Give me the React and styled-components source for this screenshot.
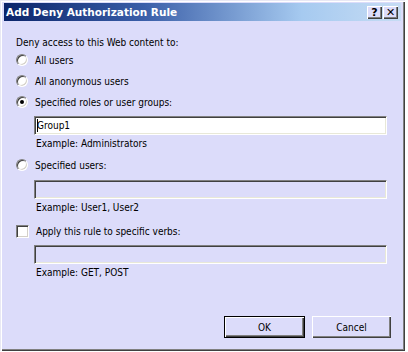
import React, { useState } from "react";
import styled, { createGlobalStyle } from "styled-components";

const GlobalStyle = createGlobalStyle`
  html, body {
    margin: 0;
    padding: 0;
    background: #ffffff;
    font-family: "DejaVu Sans Condensed", "Liberation Sans", sans-serif;
  }
`;

const Window = styled.div`
  width: 405px;
  height: 351px;
  box-sizing: border-box;
  padding: 3px 4px 4px 4px;
  background: #dcdcfa;
  display: flex;
  flex-direction: column;
  box-shadow: inset 1px 1px 0 #e8e8f4, inset 2px 2px 0 #ffffff,
    inset -1px -1px 0 #404040, inset -2px -2px 0 #808080;
`;

const TitleBar = styled.div`
  height: 18px;
  display: flex;
  align-items: center;
  justify-content: space-between;
  padding: 0 3px 0 2px;
  background: linear-gradient(to right, #0a246a 0%, #3a5ea8 35%, #a6caf0 75%, #c6dcf4 100%);
`;

const Title = styled.span`
  color: #ffffff;
  font-family: "DejaVu Sans", Verdana, sans-serif;
  font-weight: bold;
  font-size: 10.5px;
`;

const CaptionButtons = styled.div`
  display: flex;
  gap: 1px;
`;

const CaptionButton = styled.div`
  width: 15px;
  height: 13px;
  box-sizing: border-box;
  background: #dcdcfa;
  display: flex;
  align-items: center;
  justify-content: center;
  font-family: "DejaVu Sans", Verdana, sans-serif;
  font-size: 11px;
  font-weight: bold;
  color: #000;
  box-shadow: inset 1px 1px 0 #ffffff, inset -1px -1px 0 #404040, inset -2px -2px 0 #808080;
`;

const Body = styled.div`
  flex: 1;
  display: flex;
  flex-direction: column;
  padding: 13px 10px 0 12px;
  font-size: 10px;
  color: #000;
`;

const Heading = styled.div`
  height: 16px;
  display: flex;
  align-items: center;
`;

const OptionRow = styled.label`
  height: 20px;
  display: flex;
  align-items: center;
  gap: 7px;
  margin-top: ${p => p.$top || 0}px;
`;

const Radio = styled.span`
  width: 12px;
  height: 12px;
  box-sizing: border-box;
  border-radius: 50%;
  background: #ffffff;
  border: 1px solid;
  border-color: #808080 #ffffff #ffffff #808080;
  box-shadow: inset 1px 1px 0 #404040, inset -1px -1px 0 #d4d0c8;
  display: flex;
  align-items: center;
  justify-content: center;
  flex-shrink: 0;
`;

const RadioDot = styled.span`
  width: 4px;
  height: 4px;
  border-radius: 50%;
  background: #000;
`;

const Check = styled.span`
  width: 13px;
  height: 13px;
  box-sizing: border-box;
  background: #ffffff;
  border: 1px solid;
  border-color: #808080 #ffffff #ffffff #808080;
  box-shadow: inset 1px 1px 0 #404040, inset -1px -1px 0 #d4d0c8;
  flex-shrink: 0;
`;

const Field = styled.div`
  margin: ${p => p.$top || 0}px 0 0 18px;
  height: 19px;
  width: 353px;
  box-sizing: border-box;
  display: flex;
  align-items: center;
  padding-left: 2px;
  background: ${p => (p.$disabled ? "#dcdcfa" : "#ffffff")};
  border: 1px solid;
  border-color: #808080 #ffffff #ffffff #808080;
  box-shadow: inset 1px 1px 0 #404040, inset -1px -1px 0 #e8e8d8;
  font-size: 10px;
`;

const Caret = styled.span`
  display: inline-block;
  width: 1px;
  height: 13px;
  background: #000;
  margin-right: -1px;
`;

const Hint = styled.div`
  margin-left: 20px;
  height: 16px;
  display: flex;
  align-items: center;
`;

const Footer = styled.div`
  margin-top: auto;
  display: flex;
  justify-content: flex-end;
  gap: 7px;
  padding: 0 0 9px 0;
`;

const Button = styled.button`
  width: ${p => p.$w}px;
  height: 22px;
  box-sizing: border-box;
  background: #dcdcfa;
  border: ${p => (p.$default ? "1px solid #000" : "none")};
  font-family: "DejaVu Sans Condensed", "Liberation Sans", sans-serif;
  font-size: 10px;
  color: #000;
  padding: 0;
  box-shadow: inset 1px 1px 0 #ffffff, inset -1px -1px 0 #404040, inset -2px -2px 0 #808080;
`;

export default function App() {
  const [choice, setChoice] = useState("roles");
  const options = [
    { id: "all", label: "All users", top: 0 },
    { id: "anon", label: "All anonymous users", top: 1 },
    { id: "roles", label: "Specified roles or user groups:", top: 1 },
  ];

  return (
    <>
      <GlobalStyle />
      <Window>
        <TitleBar>
          <Title>Add Deny Authorization Rule</Title>
          <CaptionButtons>
            <CaptionButton>?</CaptionButton>
            <CaptionButton>✕</CaptionButton>
          </CaptionButtons>
        </TitleBar>
        <Body>
          <Heading>Deny access to this Web content to:</Heading>
          {options.map(o => (
            <OptionRow key={o.id} $top={o.top} onClick={() => setChoice(o.id)}>
              <Radio>{choice === o.id && <RadioDot />}</Radio>
              {o.label}
            </OptionRow>
          ))}
          <Field $top={4}>
            <Caret />Group1
          </Field>
          <Hint>Example: Administrators</Hint>
          <OptionRow $top={4} onClick={() => setChoice("users")}>
            <Radio>{choice === "users" && <RadioDot />}</Radio>
            Specified users:
          </OptionRow>
          <Field $top={5} $disabled />
          <Hint>Example: User1, User2</Hint>
          <OptionRow $top={6}>
            <Check />
            Apply this rule to specific verbs:
          </OptionRow>
          <Field $top={4} $disabled />
          <Hint>Example: GET, POST</Hint>
          <Footer>
            <Button $w={81} $default>OK</Button>
            <Button $w={79}>Cancel</Button>
          </Footer>
        </Body>
      </Window>
    </>
  );
}
